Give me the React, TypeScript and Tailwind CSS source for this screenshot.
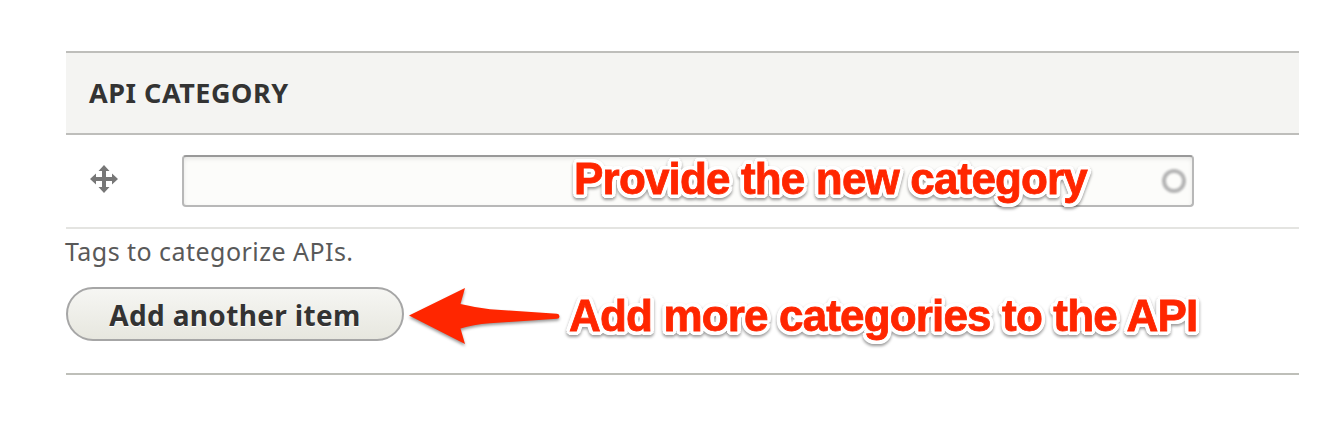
import React from "react";

function MoveIcon() {
  return (
    <svg width="28" height="28" viewBox="0 0 28 28" fill="#777777" className="block" aria-hidden="true">
      <path d="M14 0 L19.5 6 H16 V12 H22 V8.5 L28 14 L22 19.5 V16 H16 V22 H19.5 L14 28 L8.5 22 H12 V16 H6 V19.5 L0 14 L6 8.5 V12 H12 V6 H8.5 Z" />
    </svg>
  );
}

function Callout({ children }: { children: React.ReactNode }) {
  return (
    <span className="pointer-events-none whitespace-nowrap font-['Liberation_Sans',Arial,sans-serif] text-[44px] font-bold leading-[50px] tracking-[-0.84px] text-[#ff2600] [-webkit-text-stroke:0.8px_#ff2600] [text-shadow:4px_0_white,3.7px_1.5px_white,2.8px_2.8px_white,1.5px_3.7px_white,0_4px_white,-1.5px_3.7px_white,-2.8px_2.8px_white,-3.7px_1.5px_white,-4px_0_white,-3.7px_-1.5px_white,-2.8px_-2.8px_white,-1.5px_-3.7px_white,0_-4px_white,1.5px_-3.7px_white,2.8px_-2.8px_white,3.7px_-1.5px_white,2px_0_white,-2px_0_white,0_2px_white,0_-2px_white] [filter:drop-shadow(0_2px_1.5px_rgba(0,0,0,0.4))]">
      {children}
    </span>
  );
}

function Arrow() {
  return (
    <svg
      width="160"
      height="70"
      viewBox="0 0 160 70"
      className="shrink-0 [filter:drop-shadow(0_2px_1.5px_rgba(0,0,0,0.4))]"
      aria-hidden="true"
    >
      <path
        d="M5 36.5 L61 9 L56.5 25 Q71 28.5 86 30.2 L153 34.8 Q155.5 35 155.5 37.5 Q155.5 39.8 153 39.8 L86 44.3 Q69 45.5 56.5 49.5 L61 65 Z"
        fill="#ff2600"
      />
    </svg>
  );
}

export default function App() {
  return (
    <main className="h-[426px] w-[1340px] overflow-hidden bg-white pl-[66px] pr-[41px] pt-[51px] font-['Noto_Sans','Open_Sans',sans-serif]">
      <section className="flex h-[324px] flex-col border-b-2 border-[#bebfb9]">
        <header className="flex h-[84px] items-center border-y-2 border-[#bebebb] bg-[#f4f4f2] pl-[23px]">
          <h2 className="text-[27px] font-bold leading-[34px] tracking-[0.52px] text-[#333333]">API CATEGORY</h2>
        </header>
        <div className="flex h-[94px] items-start gap-16 border-b-2 border-[#e4e4e1] pl-6 pt-5">
          <div className="flex h-12 items-center">
            <MoveIcon />
          </div>
          <div className="relative h-[52px] w-[1012px] rounded-[4px] border-2 border-[#b8b8b8] border-t-[#999999] bg-[#fcfcfa] shadow-[inset_0_2px_4px_rgba(0,0,0,0.09)]">
            <input aria-label="API category" className="h-full w-full bg-transparent px-3 text-2xl outline-none" />
            <div className="pointer-events-none absolute inset-0 flex items-center justify-end gap-[75px] pr-[6px]">
              <div className="-mt-1 flex">
                <Callout>Provide the new category</Callout>
              </div>
              <span className="h-6 w-6 rounded-full border-4 border-[#b4b4b4] blur-[0.8px]" />
            </div>
          </div>
        </div>
        <p className="-ml-px pt-[5px] text-[25px] leading-[34px] tracking-[0.46px] text-[#595959]">Tags to categorize APIs.</p>
        <div className="flex h-[92px] items-center">
          <button className="flex h-[54px] w-[338px] shrink-0 items-center justify-center rounded-full border-2 border-[#a6a6a6] bg-linear-to-b from-[#f6f6f3] to-[#e7e7df] pt-[2px] text-[28px] font-bold leading-[34px] tracking-[0.35px] text-[#333333] [text-shadow:0_1px_white]">
            Add another item
          </button>
          <Arrow />
          <div className="flex pl-[5px] pt-[3px]">
            <Callout>Add more categories to the API</Callout>
          </div>
        </div>
      </section>
    </main>
  );
}
